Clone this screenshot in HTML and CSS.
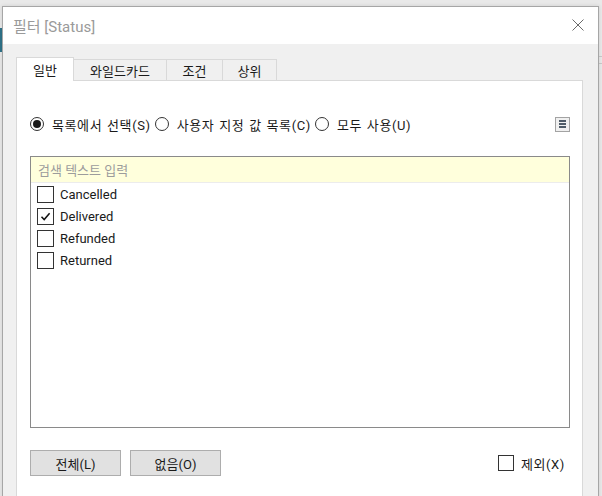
FILE: index.html
```html
<!DOCTYPE html>
<html lang="ko">
<head>
<meta charset="utf-8">
<title>필터 [Status]</title>
<link rel="stylesheet" href="styles.css">
</head>
<body>
<div class="dialog">
  <div class="titlebar">
    <span class="title">필터 [Status]</span>
    <svg class="close" width="12" height="12" viewBox="0 0 12 12"><path d="M0.5 0.5L11.5 11.5M11.5 0.5L0.5 11.5" stroke="#6a6a6a" stroke-width="1" fill="none"/></svg>
  </div>
  <div class="content">
    <div class="tabs">
      <div class="tab active">일반</div>
      <div class="tab t2">와일드카드</div>
      <div class="tab t3">조건</div>
      <div class="tab t4">상위</div>
    </div>
    <div class="panel">
      <div class="radios">
        <label class="radio on"><span class="dot"></span><span class="rlabel">목록에서 선택(S)</span></label>
        <label class="radio"><span class="dot"></span><span class="rlabel">사용자 지정 값 목록(C)</span></label>
        <label class="radio"><span class="dot"></span><span class="rlabel">모두 사용(U)</span></label>
        <span class="menu"><span></span><span></span><span></span></span>
      </div>
      <div class="listbox">
        <div class="search">검색 텍스트 입력</div>
        <div class="items">
          <div class="item"><span class="cb"></span>Cancelled</div>
          <div class="item"><span class="cb checked"><svg width="11" height="11" viewBox="0 0 11 11"><path d="M1.5 5.8L4.2 8.6L9.6 2.2" stroke="#111" stroke-width="1.5" fill="none"/></svg></span>Delivered</div>
          <div class="item"><span class="cb"></span>Refunded</div>
          <div class="item"><span class="cb"></span>Returned</div>
        </div>
      </div>
      <div class="footer">
        <button class="btn">전체(L)</button>
        <button class="btn">없음(O)</button>
        <label class="exclude"><span class="cb small"></span><span class="xlabel">제외(X)</span></label>
      </div>
    </div>
  </div>
</div>
</body>
</html>
```
FILE: styles.css
```css
html, body {
  margin: 0;
  padding: 0;
  height: 496px;
  overflow: hidden;
}
body {
  background-color: #e9e9e9;
  background-image:
    linear-gradient(#2f7389, #2f7389),
    linear-gradient(#c9c9c9, #c9c9c9),
    linear-gradient(#c9c9c9, #c9c9c9);
  background-size: 2px 24px, 4px 1px, 4px 1px;
  background-position: 0 28px, 598px 56px, 598px 63px;
  background-repeat: no-repeat;
  font-family: Roboto, "Noto Sans CJK KR", sans-serif;
  font-size: 13px;
  color: #1a1a1a;
  padding-top: 6px;
  box-sizing: border-box;
}
.dialog {
  margin-left: 2px;
  width: 597px;
  height: 520px;
  box-sizing: border-box;
  border: 1px solid #a6a6a6;
  background: #f0f0f0;
  display: flex;
  flex-direction: column;
  box-shadow: 0 0 4px rgba(0,0,0,0.12);
}
.titlebar {
  height: 37px;
  background: #fff;
  display: flex;
  align-items: center;
  justify-content: space-between;
  padding: 0 14px 0 10px;
  flex: none;
}
.title {
  font-size: 15px;
  color: #9a9a9a;
  margin-top: -1px;
}
.close {
  margin-top: -1px;
}
.content {
  flex: 1;
  padding: 13px 15px 0 13px;
  display: flex;
  flex-direction: column;
}
.tabs {
  display: flex;
  align-items: flex-end;
  height: 23px;
  flex: none;
}
.tab {
  box-sizing: border-box;
  height: 21px;
  border-top: 1px solid #d9d9d9;
  border-right: 1px solid #d9d9d9;
  display: flex;
  align-items: center;
  justify-content: center;
  background: #f0f0f0;
  color: #1a1a1a;
  padding-top: 1px;
}
.tab.active {
  width: 58px;
  height: 24px;
  margin-bottom: -1px;
  border-left: 1px solid #d9d9d9;
  background: #fff;
  position: relative;
  z-index: 1;
  padding-bottom: 2px;
}
.t2 { width: 93px; }
.t3 { width: 56px; }
.t4 { width: 54px; }
.panel {
  flex: 1;
  background: #fff;
  border: 1px solid #d9d9d9;
  padding: 33px 12px 0 13px;
  display: flex;
  flex-direction: column;
}
.radios {
  display: flex;
  align-items: center;
  height: 20px;
}
.radio {
  display: flex;
  align-items: center;
  margin-right: 4px;
}
.rlabel {
  letter-spacing: 0.6px;
  word-spacing: 1px;
}
.dot {
  width: 14px;
  height: 14px;
  box-sizing: border-box;
  border: 1px solid #333;
  border-radius: 50%;
  display: flex;
  align-items: center;
  justify-content: center;
  margin-right: 8px;
  background: #fff;
}
.radio.on .dot::after {
  content: "";
  width: 8px;
  height: 8px;
  border-radius: 50%;
  background: #1a1a1a;
}
.menu {
  margin-left: auto;
  width: 15px;
  height: 15px;
  box-sizing: border-box;
  border: 1px solid #a3a3a3;
  background: #f0f0f0;
  display: flex;
  flex-direction: column;
  align-items: center;
  justify-content: center;
  gap: 1px;
}
.menu span {
  width: 7px;
  height: 2px;
  background: #4f5b68;
}
.listbox {
  margin-top: 22px;
  height: 272px;
  box-sizing: border-box;
  border: 1px solid #8a8a8a;
  display: flex;
  flex-direction: column;
  flex: none;
}
.search {
  height: 26px;
  box-sizing: border-box;
  background: #ffffdc;
  border-bottom: 1px solid #ececec;
  color: #9c9c9c;
  padding-left: 7px;
  display: flex;
  align-items: center;
}
.items {
  padding: 0 0 0 6px;
}
.item {
  height: 22px;
  display: flex;
  align-items: center;
}
.cb {
  width: 17px;
  height: 17px;
  box-sizing: border-box;
  border: 1px solid #333;
  background: #fff;
  margin-right: 6px;
  display: flex;
  align-items: center;
  justify-content: center;
  flex: none;
}
.cb.small {
  width: 16px;
  height: 16px;
  margin-right: 7px;
}
.xlabel {
  letter-spacing: 0.6px;
}
.footer {
  margin-top: 22px;
  display: flex;
  align-items: center;
  gap: 9px;
}
.btn {
  width: 91px;
  height: 26px;
  box-sizing: border-box;
  border: 1px solid #adadad;
  background: #e1e1e1;
  font-family: Roboto, "Noto Sans CJK KR", sans-serif;
  font-size: 13px;
  color: #1a1a1a;
  padding: 0;
}
.exclude {
  margin-left: auto;
  margin-right: 5px;
  display: flex;
  align-items: center;
}
```
